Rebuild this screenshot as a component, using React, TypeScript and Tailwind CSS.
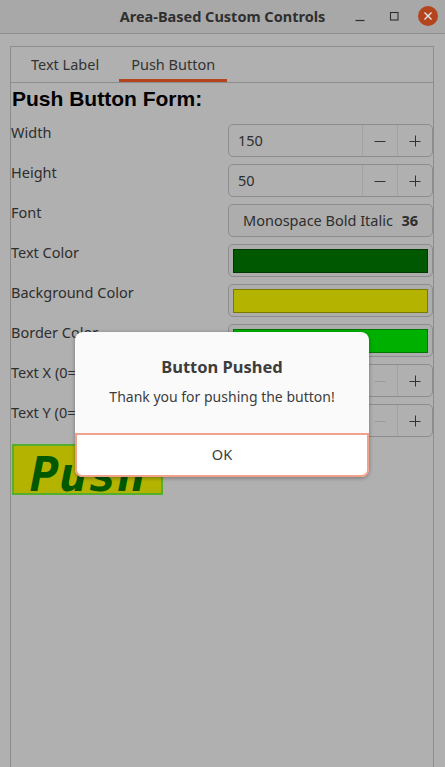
import React from "react"

const ui = { fontFamily: '"Noto Sans", "Open Sans", sans-serif' }

function Minus({ faded = false }: { faded?: boolean }) {
  return (
    <svg width="14" height="14" viewBox="0 0 14 14">
      <line x1="1.5" y1="7.5" x2="12.5" y2="7.5" stroke={faded ? "#9c9c9c" : "#333333"} strokeWidth="1" />
    </svg>
  )
}

function Plus() {
  return (
    <svg width="14" height="14" viewBox="0 0 14 14">
      <line x1="1.5" y1="7.5" x2="12.5" y2="7.5" stroke="#333333" strokeWidth="1" />
      <line x1="7.5" y1="1.5" x2="7.5" y2="12.5" stroke="#333333" strokeWidth="1" />
    </svg>
  )
}

function Spin({ value, minFaded = false }: { value: string; minFaded?: boolean }) {
  return (
    <div className="flex h-[33px] rounded-[5px] border border-[#8d8d8d]">
      <div className="flex flex-1 items-center pl-[9px] text-[14.5px] text-[#2e2e2e]">{value}</div>
      <div className="flex w-[35px] items-center justify-center border-l border-[#a2a2a2]">
        <Minus faded={minFaded} />
      </div>
      <div className="flex w-[35px] items-center justify-center border-l border-[#a2a2a2]">
        <Plus />
      </div>
    </div>
  )
}

function Swatch({ color, edge }: { color: string; edge: string }) {
  return (
    <div className="h-[33px] rounded-[5px] border border-[#8d8d8d] bg-[#adadad] pt-[4px] pr-[4px] pb-[3px] pl-[4px]">
      <div className="h-full w-full border" style={{ backgroundColor: color, borderColor: edge }} />
    </div>
  )
}

function Row({ label, children }: { label: string; children: React.ReactNode }) {
  return (
    <>
      <div className="h-[33px] whitespace-nowrap text-[14.5px] leading-4 text-[#2e2e2e]">{label}</div>
      <div>{children}</div>
    </>
  )
}

export default function App() {
  return (
    <div className="relative flex h-[767px] w-[445px] flex-col overflow-hidden bg-[#b0b0b0]" style={ui}>
      {/* title bar */}
      <div className="flex h-[34px] shrink-0 items-center border-b border-[#8f8f8f] bg-[#a8a8a8]">
        <div className="w-[102px]" />
        <div className="flex-1 text-center text-[14.5px] font-bold text-[#2f2f2f]">Area-Based Custom Controls</div>
        <div className="flex w-[102px]">
          <div className="flex h-[33px] w-[34px] items-center justify-center">
            <svg width="12" height="12" viewBox="0 0 12 12">
              <line x1="1.5" y1="9.5" x2="10.5" y2="9.5" stroke="#2f2f2f" strokeWidth="1.2" />
            </svg>
          </div>
          <div className="flex h-[33px] w-[34px] items-center justify-center">
            <svg width="12" height="12" viewBox="0 0 12 12">
              <rect x="2.5" y="1.5" width="7.5" height="7.5" fill="none" stroke="#2f2f2f" strokeWidth="1.1" />
            </svg>
          </div>
          <div className="flex h-[33px] w-[34px] items-center justify-center">
            <div className="flex h-[20px] w-[20px] -translate-y-[1px] items-center justify-center rounded-full bg-[#b3441e]">
              <svg width="10" height="10" viewBox="0 0 10 10">
                <path d="M1.5 1.5 L8.5 8.5 M8.5 1.5 L1.5 8.5" stroke="#e8e8e8" strokeWidth="1.4" />
              </svg>
            </div>
          </div>
        </div>
      </div>

      {/* notebook */}
      <div className="ml-[10px] mt-[12px] flex w-[424px] flex-1 flex-col border border-b-0 border-[#8d8d8d]">
        <div className="flex h-[36px] shrink-0 border-b border-[#8d8d8d] pl-[4px]">
          <div className="mx-[4px] flex items-center px-[12px] text-[14.5px] text-[#333333]">Text Label</div>
          <div className="mx-[4px] flex items-center border-b-[3px] border-[#b3441e] px-[12px] pt-[3px] text-[14.5px] text-[#333333]">
            Push Button
          </div>
        </div>

        <div className="flex flex-col">
          <h1
            className="mt-[4px] pl-[1px] text-[21px] font-bold leading-[24px] text-black"
            style={{ fontFamily: '"Liberation Sans", Arial, sans-serif' }}
          >
            Push Button Form:
          </h1>

          <div className="mt-[13px] grid grid-cols-[217px_205px] gap-y-[7px]">
            <Row label="Width">
              <Spin value="150" />
            </Row>
            <Row label="Height">
              <Spin value="50" />
            </Row>
            <Row label="Font">
              <div className="flex h-[33px] items-center justify-between rounded-[5px] border border-[#8d8d8d] bg-[#adadad] pl-[14px] pr-[14px] text-[14.5px] text-[#2e2e2e]">
                <span>Monospace Bold Italic</span>
                <span className="font-bold">36</span>
              </div>
            </Row>
            <Row label="Text Color">
              <Swatch color="#005800" edge="#003a00" />
            </Row>
            <Row label="Background Color">
              <Swatch color="#b4b400" edge="#7a7a00" />
            </Row>
            <Row label="Border Color">
              <Swatch color="#00b000" edge="#007800" />
            </Row>
            <Row label="Text X (0=left)">
              <Spin value="" minFaded />
            </Row>
            <Row label="Text Y (0=top)">
              <Spin value="" minFaded />
            </Row>
          </div>

          <div className="ml-[1px] mt-[7px] h-[51px] w-[151px] overflow-hidden border-2 border-[#52b02c] bg-[#b4b400]">
            <div
              className="pl-[16px] pt-[4px] text-[48px] font-bold italic leading-[48px] text-[#005800]"
              style={{ fontFamily: '"DejaVu Sans Mono", "Liberation Mono", monospace' }}
            >
              Push
            </div>
          </div>
        </div>
      </div>

      {/* modal dialog */}
      <div className="absolute left-[75px] top-[332px] flex h-[145px] w-[294px] flex-col rounded-[8px] bg-[#fafafa] shadow-[0_1px_4px_rgba(0,0,0,0.35)]">
        <div className="flex flex-1 flex-col items-center pt-[25px]">
          <div className="text-[16.5px] font-bold leading-5 text-[#3d3d3d]">Button Pushed</div>
          <div className="mt-[10px] text-[14px] leading-5 text-[#3d3d3d]">Thank you for pushing the button!</div>
        </div>
        <div className="flex h-[44px] items-center justify-center rounded-b-[7px] border-2 border-[#f0a28a] bg-white text-[14.5px] text-[#3d3d3d]">
          OK
        </div>
      </div>
    </div>
  )
}
